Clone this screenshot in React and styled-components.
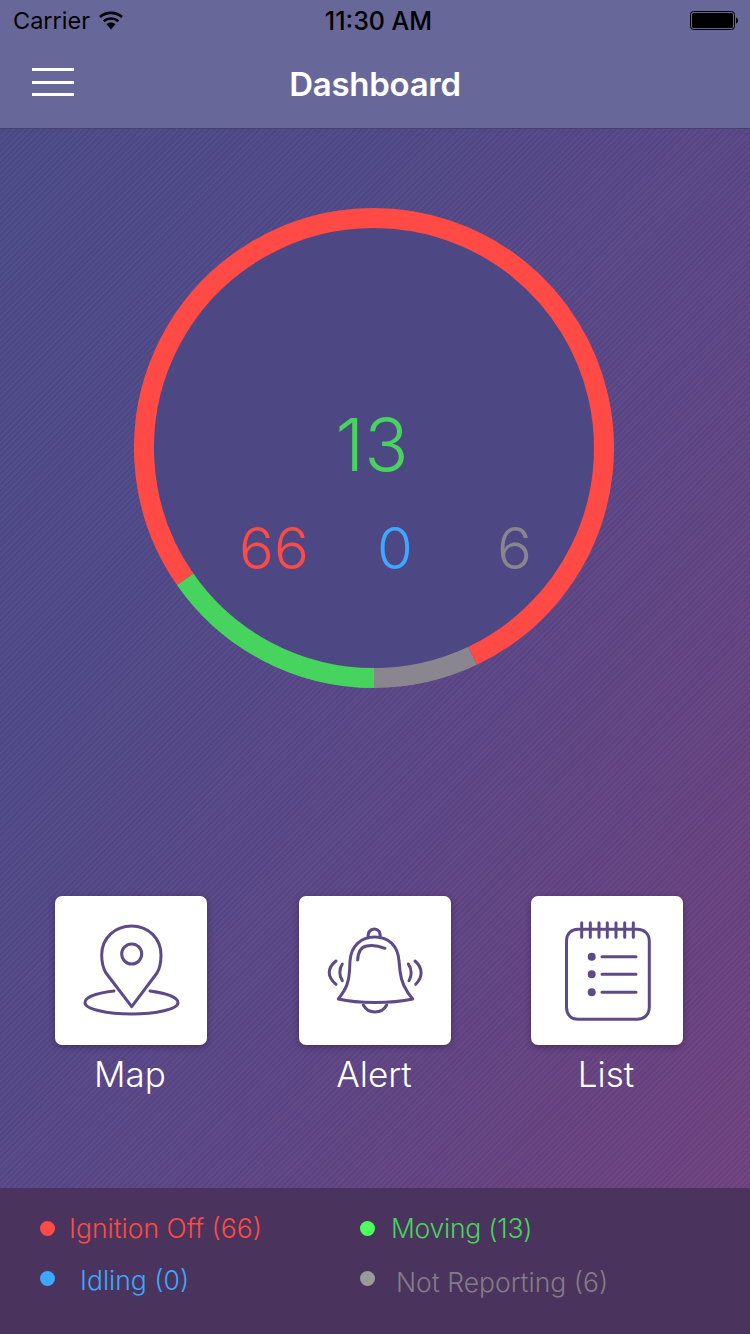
import React from "react";
import styled, { createGlobalStyle } from "styled-components";

const Global = createGlobalStyle`
  html, body { margin: 0; padding: 0; background: #4b4985; }
  * { box-sizing: border-box; }
`;
const Screen = styled.div`
  width: 750px; height: 1334px; overflow: hidden; display: flex; flex-direction: column;
  font-family: Inter, "Liberation Sans", sans-serif;
  background:
    repeating-linear-gradient(135deg, rgba(255,255,255,.028) 0 2px, rgba(0,0,0,.018) 2px 4px),
    linear-gradient(to bottom right, #4a4988 0%, #4f4888 30%, #5a4586 55%, #69417f 85%, #72417f 100%);
`;
const Header = styled.header`
  height: 129px; background: #676799; border-bottom: 1px solid #45406c; display: flex; flex-direction: column; flex: none;
`;
const StatusBar = styled.div`
  height: 41px; padding: 0 11px 0 13px; display: grid; grid-template-columns: 1fr auto 1fr; align-items: center;
  color: #000;
`;
const Carrier = styled.div`display: flex; align-items: center; gap: 8px; font-size: 23.5px;`;
const Clock = styled.div`font-weight: 500; font-size: 25px; margin-left: 5px;`;
const BatteryWrap = styled.div`display: flex; justify-content: flex-end;`;
const NavBar = styled.div`flex: 1; position: relative; display: flex; align-items: center; justify-content: center; padding-bottom: 2px;`;
const Title = styled.h1`margin: 0; color: #fff; font-size: 33px; font-weight: 600; letter-spacing: -.3px;`;
const Burger = styled.div`
  position: absolute; left: 32px; top: 27px; width: 42px; height: 28px; display: flex; flex-direction: column; justify-content: space-between;
`;
const BurgerLine = styled.span`display: block; height: 3px; background: #fff;`;
const Main = styled.main`flex: 1; display: flex; flex-direction: column; padding-top: 79px;`;
const Gauge = styled.div`position: relative; width: 480px; height: 480px; margin-left: 134px;`;
const GaugeSvg = styled.svg`display: block;`;
const GaugeValues = styled.div`position: absolute; inset: 0; display: flex; flex-direction: column; padding-top: 197px;`;
const Total = styled.div`text-align: center; padding-right: 4px; font-size: 73px; line-height: 80px; font-weight: 300; color: #47d45e;`;
const Counts = styled.div`display: flex; padding-left: 105px; margin-top: 33px;`;
const Count = styled.div`
  width: ${p => p.$w}px; font-size: 58px; line-height: 60px; font-weight: 300; color: ${p => p.$c};
`;
const Tiles = styled.div`
  display: grid; grid-template-columns: 244px 232px 152px; justify-items: start; padding-left: 55px; margin-top: 208px;
`;
const TileItem = styled.div`width: 152px; display: flex; flex-direction: column; align-items: center;`;
const Tile = styled.div`
  width: 152px; height: 149px; background: #fff; border-radius: 7px; box-shadow: 0 2px 6px rgba(40,20,60,.45);
`;
const TileLabel = styled.div`color: #fff; font-size: 35px; font-weight: 300; line-height: 40px; margin-top: 9px; padding-right: 2px;`;
const Legend = styled.footer`
  height: 146px; flex: none; background: #4a335c; display: grid; grid-template-columns: 320px 1fr; grid-auto-rows: 52px; padding: 15px 0 0 40px;
`;
const LegendItem = styled.div`
  display: flex; align-items: center; color: ${p => p.$c}; font-size: 26.5px; font-weight: 300; height: 50px;
  padding-top: ${p => p.$drop || 0}px;
`;
const Dot = styled.span`
  width: 15px; height: 15px; border-radius: 50%; background: ${p => p.$c}; flex: none; margin-right: ${p => p.$gap}px; position: relative; top: ${p => p.$up}px;
`;
const MovingText = styled.span`letter-spacing: -.25px;`;

const P = "#5d4a86";
const Ico = styled.svg`display: block; fill: none; stroke: ${P}; stroke-width: 3; stroke-linecap: round; stroke-linejoin: round;`;

const MapIcon = () => (
  <Ico width="152" height="149" viewBox="0 0 152 149">
    <path d="M76.7 110.7L51 77C48 72 46.7 66 46.7 59C46.7 42 60 30 76.7 30C93 30 106 42 106 59C106 66 105 72 102 77Z" />
    <circle cx="76.7" cy="58" r="10" />
    <path d="M59 95C42 97 30 101 30 106.7C30 113 52 118 76.7 118C101 118 123 113 123 106.7C123 101 110 97 95 95" />
  </Ico>
);
const BellIcon = () => (
  <Ico width="152" height="149" viewBox="0 0 152 149">
    <path d="M69.3 41.7C68.5 36 71.5 33 75.3 33C79 33 82 36 81 41.7" />
    <path d="M39.3 103C48 92 50 85 50.5 75L51 65C52 50 62 41 75.5 41C90 41 99 50 100 65L101 75C102 85 105 93 113.7 103C100 106 88 106.5 76 106.5C62 106.5 50 105.5 39.3 103Z" />
    <path d="M58.7 64C59 56 62 51 67.7 50C73 49 80 50 86 52.3" />
    <path d="M64.3 109C67 114 71 116 76 116C81 116 85 114 87.7 109" />
    <path d="M43.3 68C40 73 40 80 43.3 84.7M37 65C28 72 28 81 37 88.3" />
    <path d="M109.3 68C113 73 113 80 110 84.7M116 65C124 72 124 81 116.7 88.3" />
  </Ico>
);
const ListIcon = () => (
  <Ico width="152" height="149" viewBox="0 0 152 149">
    <path d="M50.7 33.3H47C40 33.3 35.5 38 35.5 45V111.3C35.5 118.3 40 123.3 47 123.3H106.3C113.3 123.3 118.3 118.3 118.3 111.3V45C118.3 38 113.3 33.3 106.3 33.3H50.7Z" />
    <path d="M50.7 26.7V41.3M59.3 26.7V41.3M68 26.7V41.3M76.3 26.7V41.3M85 26.7V41.3M93.7 26.7V41.3M102.3 26.7V41.3" />
    <path d="M71 60.7H105M71 78.3H105M71 96.3H105" />
    <circle cx="60.7" cy="60.7" r="2.5" fill={P} />
    <circle cx="60.7" cy="78.3" r="2.5" fill={P} />
    <circle cx="60.7" cy="96.3" r="2.5" fill={P} />
  </Ico>
);

const polar = (deg, r) => {
  const a = (deg - 90) * Math.PI / 180;
  return [240 + r * Math.cos(a), 240 + r * Math.sin(a)];
};
const arc = (from, to) => {
  const [x1, y1] = polar(from, 230);
  const [x2, y2] = polar(to, 230);
  return `M${x1} ${y1}A230 230 0 ${to - from > 180 ? 1 : 0} 1 ${x2} ${y2}`;
};

const Wifi = () => (
  <svg width="26" height="19" viewBox="0 0 26 19">
    <path d="M13 18.5L8.4 13C11.2 10.9 14.8 10.9 17.6 13Z" fill="#000" />
    <path d="M5.6 10.2C9.9 6.6 16.1 6.6 20.4 10.2M2 6C8.4 .6 17.6 .6 24 6" fill="none" stroke="#000" strokeWidth="2.7" />
  </svg>
);
const Battery = () => (
  <svg width="49" height="20" viewBox="0 0 49 20">
    <rect x=".5" y=".5" width="44" height="18" rx="3" fill="none" stroke="#000" />
    <rect x="2" y="2" width="41" height="15" rx="1.5" fill="#000" />
    <path d="M46 6.5C47.4 7 48 8 48 9.5C48 11 47.4 12 46 12.5Z" fill="#000" />
  </svg>
);

export default function App() {
  return (
    <Screen>
      <Global />
      <Header>
        <StatusBar>
          <Carrier>Carrier <Wifi /></Carrier>
          <Clock>11:30 AM</Clock>
          <BatteryWrap><Battery /></BatteryWrap>
        </StatusBar>
        <NavBar>
          <Burger><BurgerLine /><BurgerLine /><BurgerLine /></Burger>
          <Title>Dashboard</Title>
        </NavBar>
      </Header>
      <Main>
        <Gauge>
          <GaugeSvg width="480" height="480" viewBox="0 0 480 480">
            <circle cx="240" cy="240" r="222" fill="#4d4884" />
            <path d={arc(154.6, 180)} fill="none" stroke="#8a868f" strokeWidth="20" />
            <path d={arc(180, 235.2)} fill="none" stroke="#47d45e" strokeWidth="20" />
            <path d={arc(235.2, 360)} fill="none" stroke="#ff4a45" strokeWidth="20" />
            <path d={arc(0, 154.6)} fill="none" stroke="#ff4a45" strokeWidth="20" />
          </GaugeSvg>
          <GaugeValues>
            <Total>13</Total>
            <Counts>
              <Count $w={138} $c="#ff4a45">66</Count>
              <Count $w={120} $c="#3ea7ff">0</Count>
              <Count $w={40} $c="#8a868f">6</Count>
            </Counts>
          </GaugeValues>
        </Gauge>
        <Tiles>
          <TileItem><Tile><MapIcon /></Tile><TileLabel>Map</TileLabel></TileItem>
          <TileItem><Tile><BellIcon /></Tile><TileLabel>Alert</TileLabel></TileItem>
          <TileItem><Tile><ListIcon /></Tile><TileLabel>List</TileLabel></TileItem>
        </Tiles>
      </Main>
      <Legend>
        <LegendItem $c="#ff4a45"><Dot $c="#ff4a45" $gap={14} $up={0} />Ignition Off (66)</LegendItem>
        <LegendItem $c="#47d45e"><Dot $c="#4cff5f" $gap={16} $up={0} /><MovingText>Moving (13)</MovingText></LegendItem>
        <LegendItem $c="#3ea7ff"><Dot $c="#3ea7ff" $gap={25} $up={-2} />Idling (0)</LegendItem>
        <LegendItem $c="#837d88" $drop={4}><Dot $c="#9a9a9a" $gap={21} $up={-4} />Not Reporting (6)</LegendItem>
      </Legend>
    </Screen>
  );
}
